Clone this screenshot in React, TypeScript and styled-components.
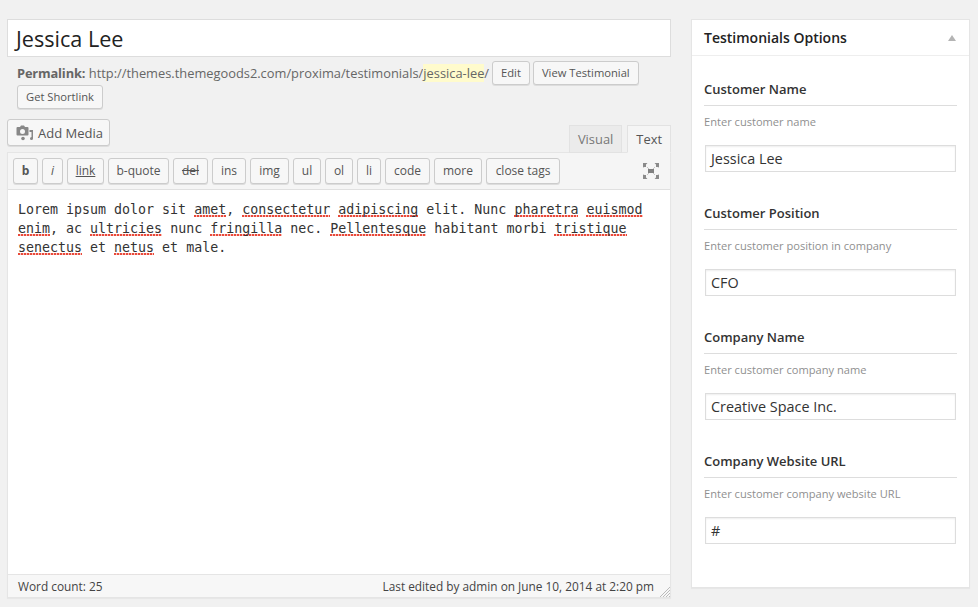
import React from 'react';
import styled, { createGlobalStyle } from 'styled-components';

const GlobalStyle = createGlobalStyle`
  html, body {
    margin: 0;
    padding: 0;
    background: #f1f1f1;
    font-family: "Open Sans", "Liberation Sans", sans-serif;
    color: #444;
  }
`;

const Page = styled.div`
  display: grid;
  grid-template-columns: 664px 279px;
  column-gap: 20px;
  align-items: start;
  padding: 19px 0 0 7px;
  width: 978px;
  height: 607px;
  box-sizing: border-box;
  overflow: hidden;
`;

const MainColumn = styled.div`
  display: flex;
  flex-direction: column;
`;

const TitleInput = styled.div`
  height: 38px;
  box-sizing: border-box;
  border: 1px solid #ddd;
  background: #fff;
  padding-left: 8px;
  font-size: 21.6px;
  line-height: 37px;
  color: #222;
`;

const PermalinkBlock = styled.div`
  display: flex;
  flex-wrap: wrap;
  align-items: center;
  padding: 4px 0 0 10px;
  width: 640px;
  font-size: 12.85px;
  line-height: 24px;
  color: #666;
`;

const PermalinkLabel = styled.strong`
  font-weight: 700;
  margin-right: 3.5px;
  letter-spacing: -0.15px;
`;

const Slug = styled.span`
  background: #fffbcc;
`;

const SmallButton = styled.button<{ $gap?: number }>`
  height: 24px;
  box-sizing: border-box;
  margin-left: ${props => props.$gap ?? 4}px;
  padding: 0 8px;
  border: 1px solid #ccc;
  border-radius: 3px;
  background: #f7f7f7;
  box-shadow: 0 1px 0 #ddd;
  font: 11.2px/22px "Open Sans", sans-serif;
  color: #555;
`;

const EditorHead = styled.div`
  display: flex;
  justify-content: space-between;
  align-items: flex-end;
  margin-top: 10px;
`;

const MediaButton = styled.button`
  display: flex;
  align-items: center;
  gap: 4px;
  height: 27px;
  width: 103px;
  margin-bottom: 6px;
  box-sizing: border-box;
  padding: 1px 0 0 8px;
  border: 1px solid #ccc;
  border-radius: 3px;
  background: #f7f7f7;
  box-shadow: 0 1px 0 #ddd;
  font: 13px/25px "Open Sans", sans-serif;
  color: #555;
`;

const Tabs = styled.div`
  display: flex;
  gap: 5px;
`;

const Tab = styled.div<{ $active?: boolean }>`
  height: 28px;
  box-sizing: border-box;
  padding: 0 8px;
  border: 1px solid #e2e2e2;
  border-bottom: ${props => (props.$active ? '1px solid #f5f5f5' : '1px solid #e2e2e2')};
  margin-bottom: -1px;
  position: relative;
  background: ${props => (props.$active ? '#f5f5f5' : '#ebebeb')};
  font-size: 12.9px;
  line-height: 27px;
  color: ${props => (props.$active ? '#555' : '#777')};
`;

const EditorBox = styled.div`
  border: 1px solid #e5e5e5;
  box-shadow: 0 1px 1px rgba(0, 0, 0, 0.04);
  background: #fff;
  display: flex;
  flex-direction: column;
  height: 446px;
  box-sizing: border-box;
`;

const Toolbar = styled.div`
  display: flex;
  align-items: center;
  gap: 4px;
  height: 37px;
  flex: none;
  box-sizing: border-box;
  padding: 0 11px 0 5px;
  background: #f5f5f5;
  border-bottom: 1px solid #e0e0e0;
`;

const QuickTag = styled.button<{ $w: number; $bold?: boolean; $italic?: boolean; $under?: boolean; $strike?: boolean }>`
  width: ${props => props.$w}px;
  height: 26px;
  box-sizing: border-box;
  padding: 0;
  border: 1px solid #ccc;
  border-radius: 3px;
  background: #f7f7f7;
  box-shadow: 0 1px 0 #ddd;
  font: 12px/24px "Open Sans", sans-serif;
  font-weight: ${props => (props.$bold ? 700 : 400)};
  font-style: ${props => (props.$italic ? 'italic' : 'normal')};
  text-decoration: ${props => (props.$under ? 'underline' : props.$strike ? 'line-through' : 'none')};
  color: #555;
`;

const FullscreenIcon = styled.svg`
  margin-left: auto;
  width: 16px;
  height: 16px;
  flex: none;
`;

const EditorText = styled.div`
  flex: 1;
  padding: 10px 10px 0;
  font-family: "DejaVu Sans Mono", "Liberation Mono", monospace;
  font-size: 13.3px;
  line-height: 19px;
  color: #333;
  white-space: pre-wrap;
`;

const Typo = styled.span`
  background-image: linear-gradient(90deg, #e9493a 66%, #f8c4be 66%);
  background-size: 3px 2px;
  background-repeat: repeat-x;
  background-position: 0 100%;
`;

const StatusBar = styled.div`
  display: flex;
  justify-content: space-between;
  align-items: center;
  flex: none;
  height: 23px;
  box-sizing: border-box;
  padding: 0 16px 0 10px;
  background: #f7f7f7;
  border-top: 1px solid #e5e5e5;
  font-size: 11.85px;
  color: #444;
  position: relative;
`;

const Grip = styled.svg`
  position: absolute;
  right: 0;
  bottom: 0;
  width: 11px;
  height: 11px;
`;

const SideBox = styled.aside`
  height: 569px;
  box-sizing: border-box;
  background: #fff;
  border: 1px solid #e5e5e5;
  box-shadow: 0 1px 1px rgba(0, 0, 0, 0.04);
`;

const SideHeader = styled.div`
  display: flex;
  justify-content: space-between;
  align-items: center;
  height: 36px;
  box-sizing: border-box;
  padding: 0 13px 0 12px;
  border-bottom: 1px solid #eee;
  font-size: 14px;
  font-weight: 600;
  color: #222;
`;

const Caret = styled.span`
  width: 0;
  height: 0;
  border-left: 4px solid transparent;
  border-right: 4px solid transparent;
  border-bottom: 6px solid #b4b4b4;
`;

const SideBody = styled.div`
  padding: 21px 12px 0;
  display: flex;
  flex-direction: column;
  gap: 29px;
`;

const Field = styled.div`
  display: flex;
  flex-direction: column;
`;

const FieldTitle = styled.div`
  height: 29px;
  box-sizing: border-box;
  border-bottom: 1px solid #ddd;
  font-size: 13px;
  font-weight: 600;
  line-height: 24px;
  color: #333;
`;

const FieldHint = styled.div`
  font-size: 11.1px;
  line-height: 16px;
  margin-top: 8px;
  color: #8f8f8f;
`;

const FieldInput = styled.div`
  width: 251px;
  height: 27px;
  box-sizing: border-box;
  margin: 15px 0 0 1px;
  padding-left: 5px;
  border: 1px solid #ddd;
  box-shadow: inset 0 1px 2px rgba(0, 0, 0, 0.07);
  font-size: 14.4px;
  line-height: 26px;
  color: #333;
`;

const tags = [
  { label: 'b', w: 25, bold: true },
  { label: 'i', w: 21, italic: true },
  { label: 'link', w: 37, under: true },
  { label: 'b-quote', w: 61 },
  { label: 'del', w: 35, strike: true },
  { label: 'ins', w: 34 },
  { label: 'img', w: 39 },
  { label: 'ul', w: 28 },
  { label: 'ol', w: 28 },
  { label: 'li', w: 24 },
  { label: 'code', w: 45 },
  { label: 'more', w: 48 },
  { label: 'close tags', w: 74 },
];

const fields = [
  { title: 'Customer Name', hint: 'Enter customer name', value: 'Jessica Lee' },
  { title: 'Customer Position', hint: 'Enter customer position in company', value: 'CFO' },
  { title: 'Company Name', hint: 'Enter customer company name', value: 'Creative Space Inc.' },
  { title: 'Company Website URL', hint: 'Enter customer company website URL', value: '#' },
];

const App = () => (
  <Page>
    <GlobalStyle />
    <MainColumn>
      <TitleInput>Jessica Lee</TitleInput>
      <PermalinkBlock>
        <PermalinkLabel>Permalink:</PermalinkLabel>
        <span>
          http://themes.themegoods2.com/proxima/testimonials/<Slug>jessica-lee</Slug>/
        </span>
        <SmallButton $gap={3}>Edit</SmallButton>
        <SmallButton $gap={3}>View Testimonial</SmallButton>
        <SmallButton $gap={0}>Get Shortlink</SmallButton>
      </PermalinkBlock>
      <EditorHead>
        <MediaButton>
          <svg width="18" height="16" viewBox="0 0 18 16" fill="#888">
            <path d="M1.500 2H4l1-1.500h3L9 2h2.500a1 1 0 0 1 1 1v6.500a1 1 0 0 1-1 1h-10a1 1 0 0 1-1-1V3a1 1 0 0 1 1-1zm5 2a2.500 2.500 0 1 0 0 5 2.500 2.500 0 0 0 0-5z" />
            <path d="M13.500 5H17v8.500a1.500 1.500 0 1 1-1.500-1.500V7h-2z" />
            <circle cx="7" cy="13.500" r="1.800" />
          </svg>
          Add Media
        </MediaButton>
        <Tabs>
          <Tab>Visual</Tab>
          <Tab $active>Text</Tab>
        </Tabs>
      </EditorHead>
      <EditorBox>
        <Toolbar>
          {tags.map(t => (
            <QuickTag key={t.label} $w={t.w} $bold={t.bold} $italic={t.italic} $under={t.under} $strike={t.strike}>
              {t.label}
            </QuickTag>
          ))}
          <FullscreenIcon viewBox="0 0 16 16">
            <path d="M4 4l8 8M12 4l-8 8" stroke="#c4c4c4" strokeWidth="1" />
            <path fill="#8a8a8a" d="M0 0h4.500L3 1.500V4H1.500L0 4.500zM16 0h-4.500L13 1.500V4h1.500L16 4.500zM0 16h4.500L3 14.500V12H1.500L0 11.500zM16 16h-4.500L13 14.500V12h1.500L16 11.500z" />
            <rect x="5" y="6" width="6" height="4" fill="#808080" />
          </FullscreenIcon>
        </Toolbar>
        <EditorText>
          Lorem ipsum dolor sit <Typo>amet</Typo>, <Typo>consectetur</Typo> <Typo>adipiscing</Typo> elit. Nunc <Typo>pharetra</Typo> <Typo>euismod</Typo>
          {'\n'}
          <Typo>enim</Typo>, ac <Typo>ultricies</Typo> nunc <Typo>fringilla</Typo> nec. <Typo>Pellentesque</Typo> habitant morbi <Typo>tristique</Typo>
          {'\n'}
          <Typo>senectus</Typo> et <Typo>netus</Typo> et male.
        </EditorText>
        <StatusBar>
          <span>Word count: 25</span>
          <span>Last edited by admin on June 10, 2014 at 2:20 pm</span>
          <Grip viewBox="0 0 11 11" stroke="#bbb" strokeWidth="1">
            <path d="M11 1L1 11M11 4L4 11M11 7L7 11M11 10L10 11" />
          </Grip>
        </StatusBar>
      </EditorBox>
    </MainColumn>
    <SideBox>
      <SideHeader>
        Testimonials Options
        <Caret />
      </SideHeader>
      <SideBody>
        {fields.map(f => (
          <Field key={f.title}>
            <FieldTitle>{f.title}</FieldTitle>
            <FieldHint>{f.hint}</FieldHint>
            <FieldInput>{f.value}</FieldInput>
          </Field>
        ))}
      </SideBody>
    </SideBox>
  </Page>
);

export default App;
